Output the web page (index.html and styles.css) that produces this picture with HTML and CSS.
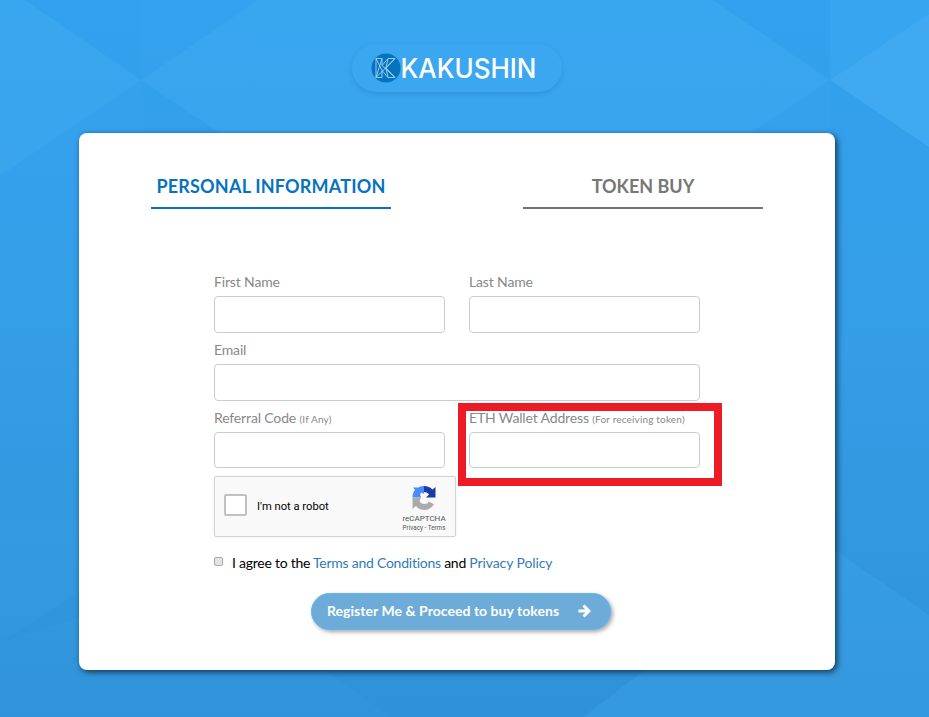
FILE: index.html
```
<!DOCTYPE html>
<html lang="en">
<head>
<meta charset="UTF-8">
<meta name="viewport" content="width=device-width, initial-scale=1.0">
<title>Kakushin - Register</title>
<link rel="stylesheet" href="styles.css">
</head>
<body>
<svg class="bg" viewBox="0 0 929 717" preserveAspectRatio="none">
  <defs>
    <linearGradient id="sky" x1="0" y1="0" x2="0" y2="1">
      <stop offset="0" stop-color="#33a1ee"/>
      <stop offset="0.5" stop-color="#349de6"/>
      <stop offset="1" stop-color="#2f92d8"/>
    </linearGradient>
  </defs>
  <rect width="929" height="717" fill="url(#sky)"/>
  <g fill="#4db5f9">
    <polygon points="0,0 25,0 141,80 0,176" opacity=".26"/>
    <polygon points="141,80 258,0 713,0 830,80 700,167 270,167" opacity=".28"/>
    <polygon points="830,80 929,14 929,147" opacity=".45"/>
    <polygon points="141,0 258,0 141,80" opacity=".06"/>
    <polygon points="830,0 929,0 929,14 830,80" opacity=".18"/>
    <polygon points="141,80 141,176 0,176" opacity=".06"/>
    <polygon points="830,80 830,167 700,167" opacity=".1"/>
    <polygon points="0,520 190,520 0,643" opacity=".08"/>
    <polygon points="583,717 645,670 835,550 929,615 929,717" opacity=".2"/>
    <polygon points="0,717 0,643 190,580 325,670 390,717" opacity=".08"/>
  </g>
</svg>

<div class="container">
  <div class="logo">
    <svg width="176" height="32" viewBox="0 0 176 32">
      <circle cx="16" cy="16" r="14.5" fill="#0673bf"/>
      <g fill="none" stroke="#a5d2f3" stroke-width="0.9">
        <path d="M6 6.500h6v7l6-7h7L16 16l9 9.500h-7l-6-7v7H6z"/>
        <path d="M6 25.500L25 6.500M6 6.500l6 12M12 6.500l-6 19M12 13.500l13 12M18 6.500l-2 9.500 2 9.500"/>
      </g>
      <text class="logo-text" x="30.500" y="26" textLength="136" lengthAdjust="spacingAndGlyphs">KAKUSHIN</text>
    </svg>
  </div>

  <div class="card">
    <div class="tabs">
      <div class="tab active">PERSONAL INFORMATION</div>
      <div class="tab">TOKEN BUY</div>
    </div>

    <form class="form">
      <div class="row">
        <div class="field">
          <label for="firstName">First Name</label>
          <input type="text" id="firstName">
        </div>
        <div class="field">
          <label for="lastName">Last Name</label>
          <input type="text" id="lastName">
        </div>
      </div>
      <div class="row">
        <div class="field">
          <label for="email">Email</label>
          <input type="text" id="email">
        </div>
      </div>
      <div class="row">
        <div class="field">
          <label for="referral">Referral Code <small>(If Any)</small></label>
          <input type="text" id="referral" class="short">
        </div>
        <div class="field wallet">
          <label for="wallet">ETH Wallet Address <small>(For receiving token)</small></label>
          <input type="text" id="wallet" class="short">
        </div>
      </div>

      <div class="captcha">
        <span class="captcha-box"></span>
        <span class="captcha-label">I'm not a robot</span>
        <div class="captcha-brand">
          <svg width="24" height="24" viewBox="0 0 24 24">
            <path fill="#4a8df6" d="M12 0v8L9.500 6.500C8 7.500 8 9 9 11.500H0.500C0.500 8 1.500 5.500 3 4L1 1.500h5.500C8 .5 10 0 12 0z"/>
            <path fill="#1c3aa9" d="M12 0c3.500 0 6.500 1.200 8.500 3.500L23.500 1v10.500H14l3-3C16 7 14.500 6 12 6z"/>
            <path fill="#ababab" d="M0.500 11.500H9L7.500 15c1 2 2.500 3 5 3 2.300 0 3.500-.8 4.500-2.500l5 3C19.500 22 16.500 24 12.500 24c-3.700 0-6.500-1.500-8.500-4l-3.500 3z"/>
          </svg>
          <span class="captcha-name">reCAPTCHA</span>
          <span class="captcha-terms">Privacy - Terms</span>
        </div>
      </div>

      <div class="agree">
        <input type="checkbox" id="agree">
        <label for="agree">I agree to the <a href="#">Terms and Conditions</a> and <a href="#" class="policy">Privacy Policy</a></label>
      </div>

      <button type="button" class="submit">
        Register Me &amp; Proceed to buy tokens
        <svg width="13" height="14" viewBox="0 0 13 14">
          <path d="M0.500 7H10M5.500 1.500L11 7l-5.500 5.500" fill="none" stroke="#fff" stroke-width="3"/>
        </svg>
      </button>
    </form>
  </div>
</div>
</body>
</html>
```

FILE: styles.css
```
* {
  box-sizing: border-box;
}

body {
  margin: 0;
  height: 717px;
  overflow: hidden;
  font-family: Lato, sans-serif;
  font-size: 14px;
  line-height: 20px;
  color: #000;
}

.bg {
  position: absolute;
  top: 0;
  left: 0;
  width: 100%;
  height: 100%;
  z-index: -1;
}

.container {
  width: 756px;
  margin-left: 79px;
  padding-top: 44px;
}

.logo {
  width: 210px;
  height: 48px;
  margin: 0 auto 41px;
  padding: 8px 0 0 18px;
  border-radius: 24px;
  background-color: #3ba7f1;
  box-shadow: 0 2px 5px rgba(0, 60, 120, 0.16);
}

.logo-text {
  font-family: Inter, sans-serif;
  font-size: 27px;
  font-weight: 500;
  fill: #fff;
}

.card {
  height: 537px;
  padding: 38px 72px 0;
  border-radius: 8px;
  background-color: #fff;
  box-shadow: 2px 2px 6px rgba(0, 0, 0, 0.65);
}

.tabs {
  display: flex;
  justify-content: space-between;
}

.tab {
  width: 240px;
  height: 38px;
  padding-top: 5px;
  border-bottom: 2px solid #737373;
  color: #777;
  font-size: 18px;
  font-weight: bold;
  text-align: center;
}

.tab.active {
  color: #0673bf;
  border-bottom-color: #0673bf;
  letter-spacing: 0.2px;
}

.form {
  width: 486px;
  margin: 63px 0 0 63px;
}

.row {
  display: flex;
  gap: 24px;
}

.field {
  flex: 1;
  height: 68px;
}

.field label {
  display: block;
  height: 24px;
  color: #888;
  letter-spacing: -0.15px;
  white-space: nowrap;
}

.field small {
  font-size: 10px;
  letter-spacing: 0.17px;
}

.field input {
  display: block;
  width: 100%;
  height: 37px;
  border: 1px solid #ccc;
  border-radius: 4px;
  background-color: #fff;
}

.field .short {
  height: 36px;
}

/* red frame around the wallet field */
.wallet {
  position: relative;
}

.wallet::after {
  content: "";
  position: absolute;
  top: -5px;
  left: -11px;
  box-sizing: border-box;
  width: 264px;
  height: 83px;
  border: 8px solid #ed1c24;
  pointer-events: none;
}

.captcha {
  display: flex;
  width: 242px;
  height: 61px;
  border: 1px solid #d3d3d3;
  border-radius: 2px;
  background-color: #f9f9f9;
  box-shadow: 0 0 3px rgba(0, 0, 0, 0.08);
  font-family: Roboto, sans-serif;
}

.captcha-box {
  width: 23px;
  height: 22px;
  margin: 17px 10px 0 9px;
  border: 2px solid #c1c1c1;
  border-radius: 2px;
  background-color: #fff;
}

.captcha-label {
  flex: 1;
  margin-top: 20px;
  font-size: 11.200px;
}

.captcha-brand {
  display: flex;
  flex-direction: column;
  align-items: center;
  width: 46px;
  margin: 9px 8px 0 0;
  color: #555;
  white-space: nowrap;
}

.captcha-name {
  margin-top: 4px;
  font-size: 8px;
  line-height: 10px;
}

.captcha-terms {
  font-size: 6.300px;
  line-height: 9px;
}

.agree {
  display: flex;
  margin-top: 16px;
}

.agree label {
  letter-spacing: -0.25px;
}

.agree input {
  appearance: none;
  width: 9px;
  height: 9px;
  margin: 4px 9px 0 0;
  border: 1px solid #aaa;
  border-radius: 2px;
  background-color: #e3e3e3;
}

.agree a {
  color: #337ab7;
  text-decoration: none;
}

.agree .policy {
  letter-spacing: -0.1px;
}

.submit {
  display: flex;
  align-items: center;
  justify-content: space-between;
  width: 300px;
  height: 37px;
  margin: 20px 0 0 97px;
  padding: 0 19px 2px 15px;
  border: 1px solid #62b5f1;
  border-radius: 19px;
  background-color: #6dacd9;
  box-shadow: 2px 2px 4px rgba(0, 0, 0, 0.35);
  color: #fff;
  font-family: Lato, sans-serif;
  font-size: 14px;
  font-weight: bold;
  letter-spacing: 0.04px;
}
```
